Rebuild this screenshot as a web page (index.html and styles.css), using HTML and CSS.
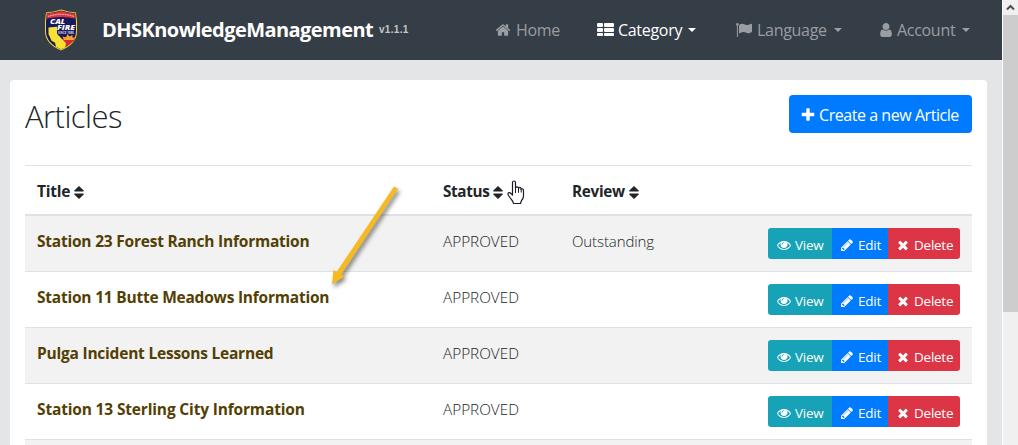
FILE: index.html
```html
<!DOCTYPE html>
<html lang="en">
<head>
<meta charset="utf-8">
<title>DHSKnowledgeManagement - Articles</title>
<link rel="stylesheet" href="styles.css">
</head>
<body>
<svg class="sprite" width="0" height="0" aria-hidden="true">
  <symbol id="home" viewBox="0 0 1792 1792"><path d="M1472 992v480q0 26-19 45t-45 19h-384v-384h-256v384h-384q-26 0-45-19t-19-45v-480q0-1 .5-3t.5-3l575-474 575 474q1 2 1 6zm223-69l-62 74q-8 9-21 11h-3q-13 0-21-7l-692-577-692 577q-12 8-24 7-13-2-21-11l-62-74q-8-10-7-23.5t11-21.5l719-599q32-26 76-26t76 26l244 204v-195q0-14 9-23t23-9h192q14 0 23 9t9 23v408l219 182q10 8 11 21.5t-7 23.5z"/></symbol>
  <symbol id="plus" viewBox="0 0 1792 1792"><path d="M1600 736v192q0 40-28 68t-68 28h-416v416q0 40-28 68t-68 28h-192q-40 0-68-28t-28-68v-416h-416q-40 0-68-28t-28-68v-192q0-40 28-68t68-28h416v-416q0-40 28-68t68-28h192q40 0 68 28t28 68v416h416q40 0 68 28t28 68z"/></symbol>
  <symbol id="times" viewBox="0 0 1792 1792"><path d="M1490 1322q0 40-28 68l-136 136q-28 28-68 28t-68-28l-294-294-294 294q-28 28-68 28t-68-28l-136-136q-28-28-28-68t28-68l294-294-294-294q-28-28-28-68t28-68l136-136q28-28 68-28t68 28l294 294 294-294q28-28 68-28t68 28l136 136q28 28 28 68t-28 68l-294 294 294 294q28 28 28 68z"/></symbol>
  <symbol id="pencil" viewBox="0 0 1792 1792"><path d="M491 1536l91-91-235-235-91 91v107h128v128h107zm523-928q0-22-22-22-10 0-17 7l-542 542q-7 7-7 17 0 22 22 22 10 0 17-7l542-542q7-7 7-17zm-54-192l416 416-832 832h-416v-416zm683 96q0 53-37 90l-166 166-416-416 166-165q36-38 90-38 53 0 91 38l235 234q37 39 37 91z"/></symbol>
  <symbol id="eye" viewBox="0 0 1792 1792"><path d="M1664 960q-152-236-381-353 61 104 61 225 0 185-131.5 316.5t-316.5 131.5-316.5-131.5-131.5-316.5q0-121 61-225-229 117-381 353 133 205 333.5 326.5t434.5 121.5 434.5-121.5 333.5-326.5zm-720-384q0-20-14-34t-34-14q-125 0-214.5 89.5t-89.5 214.5q0 20 14 34t34 14 34-14 14-34q0-86 61-147t147-61q20 0 34-14t14-34zm848 384q0 34-20 69-140 230-376.5 368.5t-499.5 138.5-499.5-139-376.5-368q-20-35-20-69t20-69q140-229 376.5-368t499.5-139 499.5 139 376.5 368q20 35 20 69z"/></symbol>
  <symbol id="user" viewBox="0 0 1792 1792"><path d="M1536 1399q0 109-62.5 187t-150.5 78h-854q-88 0-150.5-78t-62.5-187q0-85 8.5-160.5t31.5-152 58.5-131 94-89 134.5-34.5q131 128 313 128t313-128q76 0 134.5 34.5t94 89 58.5 131 31.5 152 8.5 160.5zm-256-887q0 159-112.5 271.5t-271.5 112.5-271.5-112.5-112.5-271.5 112.5-271.5 271.5-112.5 271.5 112.5 112.5 271.5z"/></symbol>
  <symbol id="list" viewBox="0 0 17 14"><path d="M1 0h4q1 0 1 1v2q0 1-1 1H1Q0 4 0 3V1Q0 0 1 0zM8 0h8q1 0 1 1v2q0 1-1 1H8Q7 4 7 3V1Q7 0 8 0zM1 5h4q1 0 1 1v2q0 1-1 1H1Q0 9 0 8V6Q0 5 1 5zM8 5h8q1 0 1 1v2q0 1-1 1H8Q7 9 7 8V6Q7 5 8 5zM1 10h4q1 0 1 1v1q0 1-1 1H1q-1 0-1-1v-1q0-1 1-1zM8 10h8q1 0 1 1v1q0 1-1 1H8q-1 0-1-1v-1q0-1 1-1z"/></symbol>
  <symbol id="flag" viewBox="0 0 16 14"><circle cx="1.4" cy="1.4" r="1.3"/><path d="M.9 1.500h1V14h-1zM3 2Q6 .2 8.500 1.200 11 2.500 12.500 1.800L15.400.700Q16 .6 16 1.200V8.400Q16 9 15.400 9.200 12.500 11 10.400 9.700 8 8.400 6 9.200L3 10.500z"/></symbol>
  <symbol id="sort" viewBox="0 0 10 13"><path d="M5 0l4.700 4.500q.5 1-.5 1H.8q-1 0-.5-1zM5 13L.3 8.500q-.5-1 .5-1h8.400q1 0 .5 1z"/></symbol>
</svg>

<div class="window">
  <div class="page">
    <nav class="navbar">
      <svg class="logo" viewBox="0 0 34 42">
        <path d="M17 .6Q24 3 32 3.500Q33.500 12 33 23Q32.500 35 17 41.500Q1.500 35 1 23Q.5 12 2 3.500Q10 3 17 .6z" fill="#f3d72e"/>
        <path d="M17 1.500Q24 3.800 31.200 4.300Q32.500 13 32 23Q31.500 34 17 40.400Q2.500 34 2 23Q1.500 13 2.800 4.300Q10 3.800 17 1.500z" fill="#18185c"/>
        <path d="M17 2Q24 4.200 31 4.600L31.500 9.500Q17 6.500 2.500 9.500L3 4.600Q10 4.200 17 2z" fill="#d8343f"/>
        <path d="M4 7.400Q17 3.200 30 7.400" fill="none" stroke="#f1a7aa" stroke-width="1.200" stroke-dasharray="1.200 .5"/>
        <path d="M17 33q2-5.500 7.500-5.500Q30 28 31.500 29Q30 34 17 40z" fill="#d42c32"/>
        <path d="M20 31l-1.500-3.500 3.500 1 1.500-3.500 2 2.500 3-1.500v3l3-.5-2 2.500z" fill="#f0a72e"/>
        <path d="M4.500 18.500l8.500-.7v7l9 9.500-.8 4.200-4.200 1.700-5-2.500-1-4-3.500-2L4.500 25z" fill="#f8e132"/>
        <text class="logo-name" x="6" y="15" textLength="15" lengthAdjust="spacingAndGlyphs">CAL</text>
        <text class="logo-name" x="13" y="20.800" textLength="18" lengthAdjust="spacingAndGlyphs">FIRE</text>
        <text class="logo-since" x="14" y="24.700" textLength="16" lengthAdjust="spacingAndGlyphs">SINCE 1885</text>
      </svg>
      <div class="brand">DHSKnowledgeManagement</div>
      <div class="version">v1.1.1</div>
      <div class="menu">
        <a class="nav-item home"><svg class="icon"><use href="#home"/></svg><span>Home</span></a>
        <a class="nav-item category"><svg class="icon-list"><use href="#list"/></svg><span>Category</span><i class="caret"></i></a>
        <a class="nav-item language"><svg class="icon-flag"><use href="#flag"/></svg><span>Language</span><i class="caret"></i></a>
        <a class="nav-item account"><svg class="icon-user" viewBox="256 128 1280 1536"><use href="#user" width="1792" height="1792"/></svg><span>Account</span><i class="caret"></i></a>
      </div>
    </nav>

    <main class="card">
      <header class="heading">
        <h1>Articles</h1>
        <a class="create"><svg class="icon"><use href="#plus"/></svg><span>Create a new Article</span></a>
      </header>
      <div class="row head">
        <div class="title">Title <svg class="sort"><use href="#sort"/></svg></div>
        <div class="status">Status <svg class="sort"><use href="#sort"/></svg></div>
        <div class="review">Review <svg class="sort"><use href="#sort"/></svg></div>
      </div>
      <div class="row striped">
        <a class="title">Station 23 Forest Ranch Information</a><div class="status">APPROVED</div><div class="review">Outstanding</div>
        <div class="actions"><a class="view"><svg><use href="#eye"/></svg>View</a><a class="edit"><svg><use href="#pencil"/></svg>Edit</a><a class="delete"><svg><use href="#times"/></svg>Delete</a></div>
      </div>
      <div class="row">
        <a class="title">Station 11 Butte Meadows Information</a><div class="status">APPROVED</div><div class="review"></div>
        <div class="actions"><a class="view"><svg><use href="#eye"/></svg>View</a><a class="edit"><svg><use href="#pencil"/></svg>Edit</a><a class="delete"><svg><use href="#times"/></svg>Delete</a></div>
      </div>
      <div class="row striped">
        <a class="title">Pulga Incident Lessons Learned</a><div class="status">APPROVED</div><div class="review"></div>
        <div class="actions"><a class="view"><svg><use href="#eye"/></svg>View</a><a class="edit"><svg><use href="#pencil"/></svg>Edit</a><a class="delete"><svg><use href="#times"/></svg>Delete</a></div>
      </div>
      <div class="row">
        <a class="title city">Station 13 Sterling City Information</a><div class="status">APPROVED</div><div class="review"></div>
        <div class="actions"><a class="view"><svg><use href="#eye"/></svg>View</a><a class="edit"><svg><use href="#pencil"/></svg>Edit</a><a class="delete"><svg><use href="#times"/></svg>Delete</a></div>
      </div>
      <div class="row last striped"></div>
    </main>
  </div>
  <div class="scrollbar">
    <svg class="up" viewBox="0 0 15 15"><path d="M4 9.500L7.500 6 11 9.500" fill="none" stroke="#505050" stroke-width="2"/></svg>
    <div class="thumb"></div>
  </div>
</div>

<svg class="arrow" viewBox="0 0 80 115"><path d="M71 6.500L75 8.800 18.300 94.500 21.500 96.500 9 104.500 10.500 90 13.800 91.800z" fill="#f5b922"/></svg>
<svg class="pointer" viewBox="0 0 18 25"><path d="M5.500 14V2.500Q5.500 1 7 1t1.500 1.500V8Q10 5.800 11.500 8V8.300Q13 6.500 14 8.300V9.300Q16.500 8 16.500 11v5Q16.500 18.500 14.500 20.500L13.500 23.500H6.500Q6 21 4 19L1.500 15.500Q.3 13.500 1.500 12.800T4 13.500L5.500 15z" fill="#fff" stroke="#1b1c2b" stroke-width="1.200" stroke-linejoin="round"/><path d="M8.500 8v5M11.500 8.300v4.500M14.200 9v3.500" stroke="#1b1c2b" stroke-width="1"/></svg>
</body>
</html>
```
FILE: styles.css
```css
* { box-sizing: border-box; }
body { margin: 0; width: 1018px; height: 445px; overflow: hidden; background: #e4e5e6; color: #212529; font: 300 15px/24px "Open Sans", "Noto Sans", sans-serif; }
svg { fill: currentColor; flex-shrink: 0; }
.sprite { position: absolute; }
.window { display: flex; height: 445px; overflow: hidden; }
.page { width: 1002px; height: 445px; flex-shrink: 0; }
.navbar { height: 60px; padding-left: 44px; display: flex; align-items: center; background: #353d47; color: #fff; }
.logo { width: 34px; height: 42px; }
.logo-name { font: italic 800 7.5px "Open Sans", sans-serif; fill: #fff; }
.logo-since { font: 700 2.8px "Open Sans", sans-serif; fill: #d5d5e6; }
.brand { width: 277px; margin-left: 24px; font-size: 20px; font-weight: 700; letter-spacing: -.55px; white-space: nowrap; }
.version { width: 117px; color: #c3c6c9; font: 700 10px/20px "Liberation Sans", Arial, sans-serif; letter-spacing: .3px; }
.menu { display: flex; margin-left: -1px; font-size: 16px; font-weight: 400; letter-spacing: -.3px; }
.nav-item { display: flex; align-items: center; gap: 5px; color: #9a9da1; white-space: nowrap; }
.nav-item.category { gap: 4px; color: #fff; }
.home { width: 102px; }
.category { width: 139px; }
.language { width: 144px; }
.icon { width: 16px; height: 16px; }
.icon-list { width: 17px; height: 14px; }
.icon-flag { width: 16px; height: 14px; }
.icon-user { width: 12px; height: 14px; }
.caret { margin-left: 2px; border: 4px solid transparent; border-top-color: currentColor; border-bottom: 0; }
.card { width: 977px; height: 365px; overflow: hidden; margin: 20px 0 0 10px; padding: 15px 15px 0; background: #fff; border-radius: 4px 4px 0 0; }
.heading { display: flex; justify-content: space-between; height: 70px; }
h1 { margin: 0; font-size: 31px; font-weight: 300; line-height: 42px; letter-spacing: -.55px; }
.create { display: flex; align-items: center; gap: 3px; width: 183px; height: 38px; padding: 2px 0 0 11px; border-radius: 4px; background: #007bff; color: #fff; font-size: 16px; font-weight: 400; letter-spacing: -.45px; white-space: nowrap; }
.row { display: flex; height: 56px; padding: 13px 12px 0; border-top: 1px solid #dee2e6; }
.row.head { height: 51px; border-bottom: 2px solid #dee2e6; font-weight: 700; }
.row.head + .row { height: 55px; border-top: 0; }
.row.last { height: 6px; padding: 0; }
.striped { background: #f2f2f2; }
.title { width: 406px; flex-shrink: 0; font-size: 15.5px; font-weight: 700; letter-spacing: -.22px; white-space: nowrap; }
a.title { color: #533f03; }
a.city { letter-spacing: -.16px; }
.status { width: 129px; font-size: 15.3px; }
.head .status { letter-spacing: -.35px; }
.review { width: 196px; letter-spacing: -.1px; }
.head .review { font-size: 15.3px; letter-spacing: -.3px; }
.sort { width: 10px; height: 13px; vertical-align: -2px; }
.actions { display: flex; height: 31px; margin-top: -1px; border-radius: 3px; overflow: hidden; color: #fff; font-size: 13.5px; font-weight: 400; letter-spacing: -.25px; line-height: 24px; }
.actions a { display: flex; align-items: center; gap: 4px; padding: 2px 0 0 9px; }
.actions svg { width: 14px; height: 14px; }
.actions .edit { padding-left: 8px; }
.actions .delete { padding-left: 8px; }
.view { width: 64px; background: #17a2b8; }
.edit { width: 56px; background: #007bff; }
.delete { width: 72px; background: #dc3545; }
.scrollbar { width: 16px; border-left: 1px solid #fff; background: #f0f0f0; }
.up { display: block; width: 15px; height: 15px; }
.thumb { height: 297px; background: #cdcdcd; }
.arrow { position: absolute; left: 323px; top: 180px; width: 80px; height: 115px; filter: drop-shadow(2px 3px 2px #0007); }
.pointer { position: absolute; left: 507px; top: 180px; width: 18px; height: 25px; }
```
